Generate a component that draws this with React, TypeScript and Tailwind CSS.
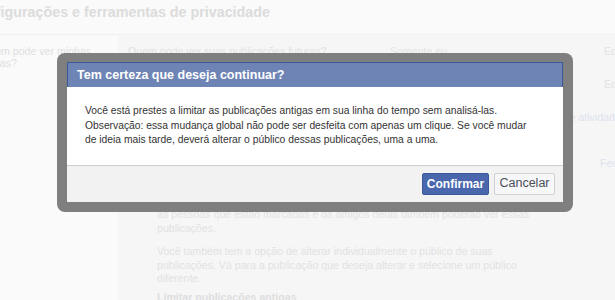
import React from "react";

/**
 * Faded privacy settings page with the "limit old posts" confirmation dialog on top
 */
function SettingsRow({
  label,
  value,
  action,
  className = "h-[33px]",
}: {
  label: React.ReactNode;
  value?: React.ReactNode;
  action?: React.ReactNode;
  className?: string;
}) {
  return (
    <div className={`grid grid-cols-[262px_210px_1fr] ${className}`}>
      <div className="pr-4">{label}</div>
      <div>{value}</div>
      <div>{action}</div>
    </div>
  );
}

function ConfirmDialog() {
  return (
    <div className="absolute left-[57px] top-[53px] w-[516px] rounded-[8px] bg-[#7f7f7f] px-[10px] pt-[9px] pb-[10px]">
      <div className="flex h-[25px] items-center border border-b-0 border-[#3b5998] bg-[#6d84b4] pl-[9px]">
        <h2 className="text-[12.5px] font-bold text-white">Tem certeza que deseja continuar?</h2>
      </div>
      <div className="bg-white px-[18px] pt-[17px] pb-[17px] text-[10.3px] leading-[14.5px] text-[#333333]">
        <p className="whitespace-nowrap">
          Você está prestes a limitar as publicações antigas em sua linha do tempo sem analisá-las.
          <br />
          Observação: essa mudança global não pode ser desfeita com apenas um clique. Se você mudar
          <br />
          de ideia mais tarde, deverá alterar o público dessas publicações, uma a uma.
        </p>
      </div>
      <div className="flex justify-end gap-[5px] border-t border-[#cccccc] bg-[#f2f2f2] px-[8px] py-[7px]">
        <button className="h-[22px] w-[67px] rounded-[2px] border border-[#3b5998] bg-[#4a67ad] text-[12px] font-bold text-white">
          Confirmar
        </button>
        <button className="h-[22px] w-[61px] rounded-[2px] border border-[#ced0d4] bg-[#f6f7f9] text-[12.5px] text-[#4b4f56]">
          Cancelar
        </button>
      </div>
    </div>
  );
}

export default function App() {
  return (
    <div className="relative h-[300px] w-[615px] overflow-hidden bg-[#fafafa] [font-family:'Liberation_Sans',Arial,sans-serif]">
      <div className="-ml-[32px] w-[720px]">
        <h1 className="h-[35px] border-b border-[#f0f0f0] pt-[2px] text-[14.3px] font-bold leading-[20px] text-[#dcdcdc]">
          Configurações e ferramentas de privacidade
        </h1>
        <div className="flex">
          <div className="w-[150px] shrink-0 pl-[13px] pt-[10px] text-[10.6px] leading-[12px] text-[#e0e0e0]">
            Quem pode ver minhas
            <br />
            coisas?
          </div>
          <div className="h-[265px] flex-1 bg-[#f6f6f6] pl-[10px] pt-[9px] text-[10.6px] leading-[14px] text-[#e2e2e2]">
            <SettingsRow
              label="Quem pode ver suas publicações futuras?"
              value={<span className="text-[#e4e4e4]">Somente eu</span>}
              action={<span className="pl-[4px]">Editar</span>}
            />
            <SettingsRow
              label="Revise todas as suas publicações e itens nos quais você foi marcado"
              action={<span className="pl-[4px]">Editar</span>}
            />
            <div className="flex h-[46px]">
              <div className="w-[262px] pr-4">Quem pode ver as coisas que você publicar?</div>
              <div className="pl-[110px] text-[#dde3ee] whitespace-nowrap">Usar registro de atividades</div>
            </div>
            <div className="grid grid-cols-[472px_1fr]">
              <div>Limitar o público de publicações antigas?</div>
              <div className="text-[#dde3ee]">Fechar</div>
            </div>
            <div className="pl-[29px] pt-[11px] leading-[13.5px] whitespace-nowrap">
              <p>
                Se você usar esta ferramenta, o conteúdo que você compartilhou com amigos
                <br />
                de amigos ou Público na sua linha do tempo será alterado para Amigos. Mas
                <br />
                as pessoas que estão marcadas e os amigos delas também poderão ver essas
                <br />
                publicações.
              </p>
              <p className="mt-[10px]">
                Você também tem a opção de alterar individualmente o público de suas
                <br />
                publicações. Vá para a publicação que deseja alterar e selecione um público
                <br />
                diferente.
              </p>
              <p className="mt-[5px] font-bold text-[#dedede]">Limitar publicações antigas</p>
            </div>
          </div>
        </div>
      </div>
      <ConfirmDialog />
    </div>
  );
}
